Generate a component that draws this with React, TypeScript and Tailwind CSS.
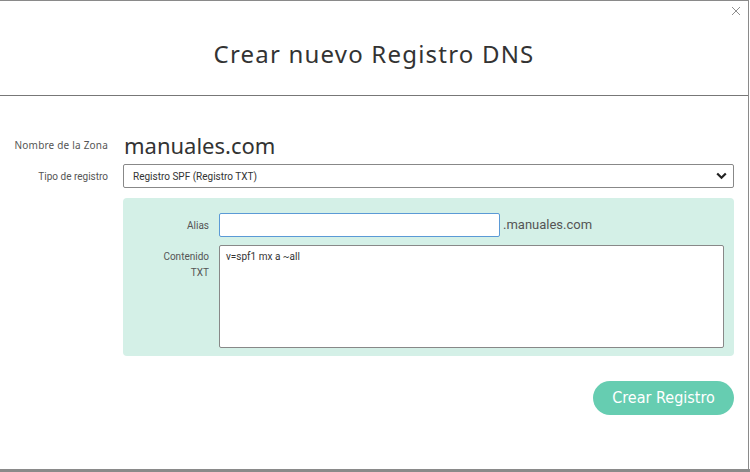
import React from "react";

const title = { fontFamily: '"Noto Sans", "Open Sans", sans-serif' };
const ui = { fontFamily: 'Roboto, "Liberation Sans", sans-serif' };

export default function App() {
  return (
    <div className="w-[750px] h-[472px] bg-white overflow-hidden flex flex-col">
      <div className="w-[749px] h-[469px] border-t border-r border-[#8a8a8a] bg-white flex flex-col relative">
        <button className="absolute right-[6px] top-[4px] w-[12px] h-[12px] flex items-center justify-center">
          <svg width="10" height="10" viewBox="0 0 10 10" fill="none" stroke="#8f8f8f" strokeWidth="1">
            <path d="M1 1 9 9M9 1 1 9" />
          </svg>
        </button>

        <div className="h-[95px] border-b border-[#777] flex justify-center pt-[36px]">
          <h1 className="text-[24px] leading-[34px] text-[#333] tracking-[1.2px]" style={title}>
            Crear nuevo Registro DNS
          </h1>
        </div>

        <div className="pt-[37px] pr-[14px] flex flex-col" style={ui}>
          <div className="flex items-center h-[24px]">
            <div className="w-[108px] text-right text-[10px] text-[#555] tracking-[0.2px]" style={title}>
              Nombre de la Zona
            </div>
            <div className="ml-[16px] text-[22px] leading-[24px] text-[#333]" style={title}>
              manuales.com
            </div>
          </div>

          <div className="flex items-center mt-[7px]">
            <div className="w-[108px] text-right text-[10px] text-[#555]">Tipo de registro</div>
            <div className="ml-[15px] flex-1 h-[24px] border border-[#888] rounded-[2px] flex items-center justify-between pl-[9px] pr-[6px]">
              <span className="text-[10px] text-[#333]">Registro SPF (Registro TXT)</span>
              <svg width="11" height="8" viewBox="0 0 11 8" fill="none" stroke="#222" strokeWidth="2.2">
                <path d="M1.2 1.5 5.5 5.8 9.8 1.5" />
              </svg>
            </div>
          </div>

          <div className="ml-[123px] mt-[10px] bg-[#d4f0e7] rounded-[4px] pt-[15px] pb-[8px] pr-[10px]">
            <div className="flex items-center">
              <div className="w-[86px] text-right text-[10px] text-[#555]">Alias</div>
              <div className="ml-[10px] w-[281px] h-[24px] bg-white border border-[#5b9ad6] rounded-[2px]" />
              <span className="ml-[3px] text-[13px] text-[#555]">.manuales.com</span>
            </div>
            <div className="flex mt-[8px]">
              <div className="w-[86px] text-right text-[10px] leading-[16px] text-[#555] pt-[4px]">
                Contenido
                <br />
                TXT
              </div>
              <div className="ml-[10px] flex-1 h-[103px] bg-white border border-[#888] rounded-[2px] px-[6px] pt-[4px] text-[10px] leading-[14px] text-[#333]">
                v=spf1 mx a ~all
              </div>
            </div>
          </div>

          <div className="flex justify-end mt-[25px]">
            <button
              className="w-[141px] h-[34px] rounded-full bg-[#66cdb1] text-white text-[16px]"
              style={{ fontFamily: '"DejaVu Sans Condensed", "Liberation Sans Narrow", sans-serif' }}
            >
              Crear Registro
            </button>
          </div>
        </div>
      </div>
      <div className="h-[3px] bg-[#8a8a8a]" />
    </div>
  );
}
